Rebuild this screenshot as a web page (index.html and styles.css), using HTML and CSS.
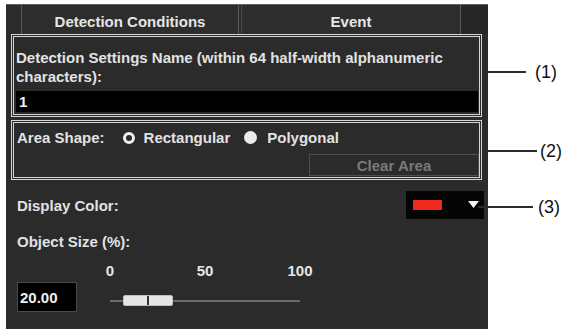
FILE: index.html
```html
<!DOCTYPE html>
<html>
<head>
<meta charset="utf-8">
<link rel="stylesheet" href="styles.css">
</head>
<body>
<div class="figure">
  <div class="panel">
    <div class="tabs">
      <div class="tab-lead"></div>
      <div class="tab tab-first">Detection Conditions</div>
      <div class="tab tab-second">Event</div>
      <div class="tab-rest"></div>
    </div>

    <div class="box box-name">
      <div class="label">Detection Settings Name (within 64 half-width alphanumeric characters):</div>
      <div class="text-input">1</div>
    </div>

    <div class="box box-area">
      <div class="area-row">
        <span class="label">Area Shape:</span>
        <span class="radio radio-on"></span>
        <span class="label">Rectangular</span>
        <span class="radio radio-off"></span>
        <span class="label">Polygonal</span>
      </div>
      <div class="area-actions">
        <div class="btn-clear">Clear Area</div>
      </div>
    </div>

    <div class="color-row">
      <span class="label">Display Color:</span>
      <div class="color-select">
        <span class="swatch"></span>
        <svg class="caret" width="11" height="8" viewBox="0 0 11 8"><polygon points="0,0 11,0 5.5,7" fill="#f2f2f2"/></svg>
      </div>
    </div>

    <div class="size-label label">Object Size (%):</div>
    <div class="size-row">
      <div class="num-input">20.00</div>
      <div class="slider">
        <div class="ticks">
          <span class="tick">0</span>
          <span class="tick">50</span>
          <span class="tick">100</span>
        </div>
        <div class="track-wrap">
          <div class="track"></div>
          <div class="thumb"><span class="thumb-mark"></span></div>
        </div>
      </div>
    </div>
  </div>

  <div class="callouts">
    <div class="callout callout-1"><span class="lead-line"></span><span class="callout-text">(1)</span></div>
    <div class="callout callout-2"><span class="lead-line"></span><span class="callout-text">(2)</span></div>
    <div class="callout callout-3"><span class="lead-line"></span><span class="callout-text">(3)</span></div>
  </div>
</div>
</body>
</html>
```

FILE: styles.css
```css
html, body {
  margin: 0;
  padding: 0;
  background: #ffffff;
}

body {
  font-family: "Liberation Sans", Arial, sans-serif;
  width: 573px;
  height: 329px;
  overflow: hidden;
}

.figure {
  display: flex;
  align-items: flex-start;
  padding: 4px 0 0 6px;
}

.panel {
  width: 482px;
  height: 330px;
  background: #2b2b2b;
  display: flex;
  flex-direction: column;
  color: #e4e4e4;
  font-size: 15px;
  font-weight: bold;
  box-sizing: border-box;
  border-top: 1px solid #5e5e5e;
}

.label {
  line-height: 19px;
  color: #e2e2e2;
}

/* Tabs */
.tabs {
  display: flex;
  height: 29px;
}

.tab-lead {
  width: 15px;
  border-right: 1px solid #5a5a5a;
}

.tab {
  display: flex;
  justify-content: center;
  align-items: center;
  padding-top: 4px;
  box-sizing: border-box;
  color: #e6e6e6;
  font-size: 15px;
  background: #2d2d2d;
  border-right: 1px solid #5a5a5a;
}

.tab-first {
  width: 217px;
}

.tab-second {
  width: 220px;
  margin-left: 2px;
  border-left: 1px solid #4a4a4a;
}

.tab-rest {
  flex: 1;
  background: #262626;
}

/* Boxes */
.box {
  margin-left: 5px;
  width: 471px;
  box-sizing: border-box;
  border: 3px double #d6d6d6;
}

.box-name {
  padding: 11px 1px 2px 2px;
}

.box-name .label {
  margin-bottom: 5px;
}

.text-input {
  height: 21px;
  background: #000000;
  color: #f2f2f2;
  font-size: 15px;
  line-height: 22px;
  padding-left: 3px;
}

.box-area {
  margin-top: 3px;
  padding: 5px 0 1px 3px;
}

.area-row {
  display: flex;
  align-items: center;
}

.radio {
  display: inline-block;
  box-sizing: border-box;
  width: 12px;
  height: 12px;
  border-radius: 50%;
}

.radio-on {
  margin-left: 18px;
  margin-right: 9px;
  border: 3px solid #f0f0f0;
  background: #2b2b2b;
}

.radio-off {
  width: 13px;
  height: 13px;
  margin-left: 14px;
  margin-right: 10px;
  background: #ececec;
}

.area-actions {
  display: flex;
  justify-content: flex-end;
  margin-top: 7px;
}

.btn-clear {
  width: 170px;
  height: 22px;
  box-sizing: border-box;
  border: 1px solid #4e4e4e;
  color: #7a7a7a;
  font-size: 15px;
  display: flex;
  align-items: center;
  justify-content: center;
}

/* Display color */
.color-row {
  display: flex;
  align-items: center;
  justify-content: space-between;
  margin-top: 11px;
  padding-left: 11px;
  padding-right: 4px;
}

.color-select {
  width: 78px;
  height: 28px;
  background: #050505;
  display: flex;
  align-items: center;
  box-sizing: border-box;
  padding-left: 7px;
}

.swatch {
  width: 29px;
  height: 10px;
  background: #ee2a1c;
}

.caret {
  margin-left: 26px;
}

/* Object size */
.size-label {
  margin-top: 13px;
  padding-left: 11px;
}

.size-row {
  display: flex;
  align-items: flex-start;
  margin-top: 10px;
  padding-left: 11px;
}

.num-input {
  margin-top: 21px;
  width: 60px;
  height: 30px;
  box-sizing: border-box;
  background: #000000;
  border: 1px solid #4a4a4a;
  color: #f0f0f0;
  font-size: 15px;
  display: flex;
  align-items: center;
  padding-left: 2px;
}

.slider {
  width: 190px;
  margin-left: 33px;
}

.ticks {
  display: flex;
  justify-content: space-between;
  height: 19px;
}

.tick {
  width: 0;
  display: flex;
  justify-content: center;
  line-height: 19px;
  font-size: 15px;
  color: #e6e6e6;
}

.track-wrap {
  position: relative;
  height: 32px;
}

.track {
  position: absolute;
  left: 0;
  right: 0;
  top: 20px;
  height: 2px;
  background: #6a6a6a;
}

.thumb {
  position: absolute;
  left: 13px;
  top: 15px;
  width: 50px;
  height: 11px;
  box-sizing: border-box;
  border: 1px solid #bdbdbd;
  border-radius: 2px;
  background: #e6e6e6;
  display: flex;
  justify-content: center;
}

.thumb-mark {
  width: 2px;
  height: 9px;
  background: #333333;
}

/* Callouts */
.callouts {
  display: flex;
  flex-direction: column;
  position: relative;
  z-index: 1;
}

.callout {
  display: flex;
  align-items: center;
  height: 20px;
}

.lead-line {
  height: 2px;
  background: #2a2a2a;
}

.callout-text {
  font-size: 18px;
  line-height: 20px;
  color: #111111;
}

.callout-1 {
  margin-top: 58px;
  margin-left: -3px;
}

.callout-1 .lead-line {
  width: 41px;
  margin-right: 9px;
}

.callout-2 {
  margin-top: 59px;
  margin-left: -5px;
}

.callout-2 .lead-line {
  width: 54px;
  margin-right: 3px;
}

.callout-3 {
  margin-top: 36px;
  margin-left: -10px;
}

.callout-3 .lead-line {
  width: 55px;
  margin-right: 5px;
}
```
